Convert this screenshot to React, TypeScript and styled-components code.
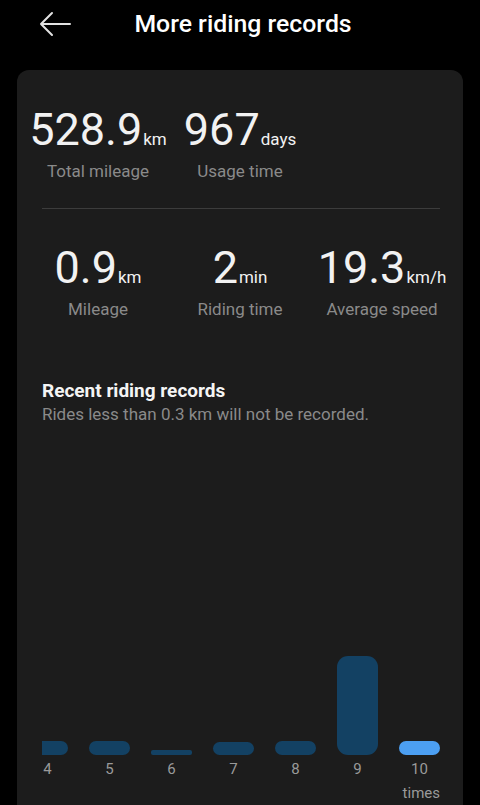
import React from 'react';
import styled, { createGlobalStyle } from 'styled-components';

const GlobalStyle = createGlobalStyle`
    html, body {
        margin: 0;
        padding: 0;
        background: #000;
        font-family: Roboto, 'Noto Sans', sans-serif;
        -webkit-font-smoothing: antialiased;
    }
`

const Page = styled.div`
    width: 480px;
    height: 805px;
    overflow: hidden;
    background: #000;
`
const Header = styled.header`
    display: grid;
    grid-template-columns: 1fr auto 1fr;
    align-items: center;
    height: 48px;
`
const BackButton = styled.button`
    display: flex;
    align-items: center;
    justify-self: start;
    margin-left: 38px;
    padding: 0;
    border: none;
    background: none;
    color: #e2e2e2;
    cursor: pointer;
`
const Title = styled.h1`
    margin: 0 0 0 6px;
    font-size: 24.8px;
    line-height: 48px;
    font-weight: 500;
    color: #fff;
`
const Card = styled.section`
    margin: 22px 17px 0;
    height: 760px;
    background: #1c1c1c;
    border-radius: 12px;
    padding-top: 34px;
    box-sizing: border-box;
`
const StatsGrid = styled.div`
    display: grid;
    grid-template-columns: repeat(3, 142px);
    padding: 0 10px;
`
const Stat = styled.div`
    display: flex;
    flex-direction: column;
    align-items: center;
`
const Number = styled.div`
    display: flex;
    align-items: baseline;
    color: #f2f2f2;
`
const Value = styled.span`
    font-size: 45px;
    line-height: 52px;
    font-weight: 400;
`
const Unit = styled.span`
    font-size: 17px;
    margin-left: 1px;
`
const Label = styled.div`
    margin-top: 4px;
    font-size: 17px;
    line-height: 22px;
    color: #8a8a8a;
`
const Divider = styled.hr`
    margin: 26px 23px 33px 25px;
    border: none;
    height: 1px;
    background: #3c3c3c;
`
const Records = styled.div`
    padding: 59px 23px 0 25px;
`
const RecordsTitle = styled.h2`
    margin: 0;
    font-size: 19px;
    line-height: 24px;
    font-weight: 700;
    color: #f4f4f4;
`
const RecordsNote = styled.p`
    margin: 0;
    font-size: 17px;
    line-height: 22px;
    color: #8a8a8a;
`
const ChartRow = styled.div`
    display: flex;
    justify-content: flex-end;
    align-items: flex-end;
    gap: 21px;
    height: 353px;
    overflow: hidden;
`
const Column = styled.div`
    flex: 0 0 41px;
    display: flex;
    flex-direction: column;
    align-items: center;
`
const Bar = styled.div<{ $active?: boolean; $h: number }>`
    width: 100%;
    background: ${p => p.$active ? '#4c9ff2' : '#134163'};
    border-radius: ${p => p.$h < 8 ? '2px' : p.$h > 40 ? '11px' : '8px'};
`
const Tick = styled.span`
    margin-top: 5px;
    font-size: 15px;
    line-height: 18px;
    color: #9a9a9a;
`
const Times = styled.div`
    margin-top: 6px;
    text-align: right;
    font-size: 15px;
    line-height: 18px;
    color: #9a9a9a;
`

const records = [
    { day: 4, h: 14 },
    { day: 5, h: 14 },
    { day: 6, h: 5 },
    { day: 7, h: 13 },
    { day: 8, h: 14 },
    { day: 9, h: 99 },
    { day: 10, h: 14, active: true },
]

function BackArrow() {
    return (
        <svg width="34" height="26" viewBox="0 0 34 26" fill="none">
            <path d="M3 13H32M14 2L3 13L14 24" stroke="currentColor" strokeWidth="2" strokeLinecap="round" strokeLinejoin="round" />
        </svg>
    )
}

function StatBlock(props) {
    let { value, unit, label } = props;
    return (
        <Stat>
            <Number>
                <Value>{value}</Value>
                <Unit>{unit}</Unit>
            </Number>
            <Label>{label}</Label>
        </Stat>
    )
}

export default function App() {
    return (
        <Page>
            <GlobalStyle />
            <Header>
                <BackButton aria-label="Back"><BackArrow /></BackButton>
                <Title>More riding records</Title>
            </Header>
            <Card>
                <StatsGrid>
                    <StatBlock value="528.9" unit="km" label="Total mileage" />
                    <StatBlock value="967" unit="days" label="Usage time" />
                </StatsGrid>
                <Divider />
                <StatsGrid>
                    <StatBlock value="0.9" unit="km" label="Mileage" />
                    <StatBlock value="2" unit="min" label="Riding time" />
                    <StatBlock value="19.3" unit="km/h" label="Average speed" />
                </StatsGrid>
                <Records>
                    <RecordsTitle>Recent riding records</RecordsTitle>
                    <RecordsNote>Rides less than 0.3 km will not be recorded.</RecordsNote>
                    <ChartRow>
                        {records.map(r => (
                            <Column key={r.day}>
                                <Bar $h={r.h} $active={r.active} style={{ height: r.h }} />
                                <Tick>{r.day}</Tick>
                            </Column>
                        ))}
                    </ChartRow>
                    <Times>times</Times>
                </Records>
            </Card>
        </Page>
    );
}
